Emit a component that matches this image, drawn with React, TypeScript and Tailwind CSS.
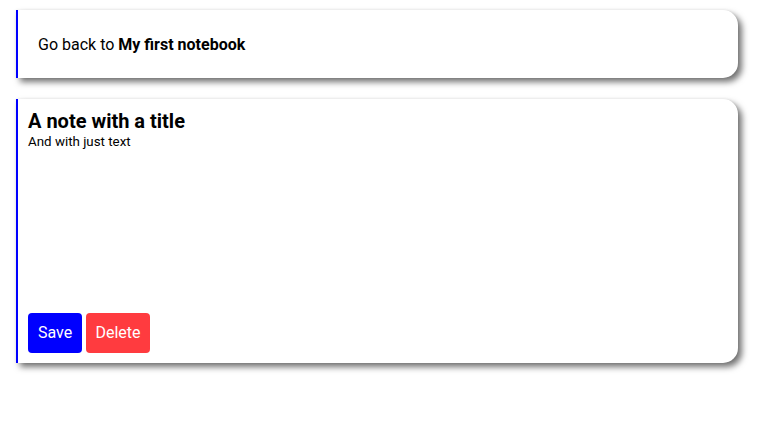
import React from 'react';

const cardShadow = 'shadow-[0_0_3px_rgba(0,0,0,0.07),4px_4px_6px_rgba(0,0,0,0.55)]';

export default function App() {
  return (
    <div className="min-h-screen bg-white pt-[10px] pl-4 pr-[33px] font-['Roboto',sans-serif] text-black">
      <div className={`h-[68px] flex items-center bg-white border-l-2 border-[#0000ff] rounded-r-[15px] pl-5 pt-[2px] ${cardShadow}`}>
        <p className="text-base">
          Go back to <span className="font-bold">My first notebook</span>
        </p>
      </div>

      <div className={`mt-[21px] h-[264px] flex flex-col justify-between bg-white border-l-2 border-[#0000ff] rounded-r-[15px] px-[10px] pt-[10px] pb-[10px] ${cardShadow}`}>
        <div>
          <h1 className="text-[20px] leading-6 font-bold">A note with a title</h1>
          <p className="text-[13.33px] leading-5 -mt-[1px]">And with just text</p>
        </div>
        <div className="flex gap-1">
          <button className="h-10 w-[54px] rounded bg-[#0000ff] text-white text-base">Save</button>
          <button className="h-10 w-16 rounded bg-[#ff3b3f] text-white text-base">Delete</button>
        </div>
      </div>
    </div>
  );
}
